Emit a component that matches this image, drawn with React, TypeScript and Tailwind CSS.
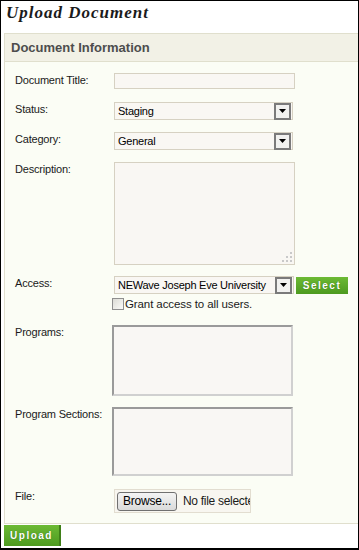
import React from 'react';

// small dropdown arrow button used by the select boxes
function ArrowButton() {
  return (
    <div className="flex h-[17px] w-[17px] shrink-0 items-center justify-center border-2 border-[#7a7a7a] bg-[#f1f1ef]">
      <svg width="7" height="4" viewBox="0 0 7 4">
        <path d="M0 0h7L3.5 4z" fill="#000" />
      </svg>
    </div>
  );
}

function FakeSelect({ value, width }: { value: string; width: string }) {
  return (
    <div className={`flex h-[18px] items-center justify-between border border-[#d6d1c2] bg-[#f9f7f3] pl-[3px] pr-px ${width}`}>
      <span className="whitespace-nowrap text-[11px] leading-none tracking-[-0.25px] text-black">{value}</span>
      <ArrowButton />
    </div>
  );
}

function Row({ label, children, className = '' }: { label: string; children: React.ReactNode; className?: string }) {
  return (
    <div className={`flex items-start ${className}`}>
      <div className="w-[99px] shrink-0 pt-[1px] text-[11px] leading-[13px] tracking-[-0.2px] text-[#1a1a1a]">{label}</div>
      {children}
    </div>
  );
}

function GreenButton({ text, className = '' }: { text: string; className?: string }) {
  return (
    <div
      className={`flex items-center justify-center bg-gradient-to-b from-[#6cba34] to-[#4d9a1f] text-[10px] font-bold tracking-[1.5px] text-white [text-shadow:0_0_1px_#2d6a10] ${className}`}
    >
      {text}
    </div>
  );
}

function ListBox({ height }: { height: string }) {
  return (
    <div className={`ml-[-2px] w-[181px] border-2 border-t-[#9a9a9a] border-l-[#9a9a9a] border-r-[#d0d0d0] border-b-[#d0d0d0] bg-[#f9f7f4] ${height}`} />
  );
}

export default function App() {
  return (
    <div className="h-[550px] w-[359px] overflow-hidden border-l border-t border-r border-b-2 border-black bg-white font-['Liberation_Sans',Arial,sans-serif]">
      <div className="h-[32px] pl-[5px] pt-[2px] font-['Liberation_Serif',serif] text-[17px] font-bold italic leading-[20px] tracking-[1px] text-[#1b1b1b]">
        Upload Document
      </div>

      <div className="ml-[3px] border-l border-t border-b border-[#e0dfcd]">
        <div className="flex h-[28px] items-center border-b border-[#e0dfcd] bg-[#f2f1e6] pl-[6px] text-[13px] font-bold text-[#4d4d4d]">
          Document Information
        </div>

        <div className="flex flex-col bg-[#fbfdf5] pb-[10px] pl-[10px] pt-[11px]">
          <Row label="Document Title:">
            <div className="h-[16px] w-[181px] border border-[#d6d1c2] bg-[#f9f7f3]" />
          </Row>

          <Row label="Status:" className="mt-[13px]">
            <FakeSelect value="Staging" width="w-[179px]" />
          </Row>

          <Row label="Category:" className="mt-[12px]">
            <FakeSelect value="General" width="w-[179px]" />
          </Row>

          <Row label="Description:" className="mt-[12px]">
            <div className="flex h-[103px] w-[181px] items-end justify-end border border-[#d6d1c2] bg-[#f9f7f3] p-[2px]">
              <svg width="11" height="11" viewBox="0 0 11 11">
                <rect x="9" y="1" width="2" height="2" fill="#c9c9c9" />
                <rect x="5" y="5" width="2" height="2" fill="#c9c9c9" />
                <rect x="9" y="5" width="2" height="2" fill="#c9c9c9" />
                <rect x="1" y="9" width="2" height="2" fill="#c9c9c9" />
                <rect x="5" y="9" width="2" height="2" fill="#c9c9c9" />
                <rect x="9" y="9" width="2" height="2" fill="#c9c9c9" />
              </svg>
            </div>
          </Row>

          <Row label="Access:" className="mt-[11px]">
            <div className="flex flex-col">
              <div className="flex items-center">
                <FakeSelect value="NEWave Joseph Eve University" width="w-[180px]" />
                <GreenButton text="Select" className="ml-[2px] mt-px h-[17px] w-[52px]" />
              </div>
              <div className="ml-[-2px] mt-[3px] flex items-center">
                <div className="h-[12px] w-[12px] border border-[#8f8f8f] bg-gradient-to-br from-[#dcdcd6] to-[#fbfbf8]" />
                <span className="ml-px text-[11.5px] leading-[14px] tracking-[-0.1px] text-[#1a1a1a]">Grant access to all users.</span>
              </div>
            </div>
          </Row>

          <Row label="Programs:" className="mt-[14px]">
            <ListBox height="h-[71px]" />
          </Row>

          <Row label="Program Sections:" className="mt-[11px]">
            <ListBox height="h-[69px]" />
          </Row>

          <Row label="File:" className="mt-[13px]">
            <div className="flex h-[24px] w-[137px] items-center overflow-hidden border border-[#e2ddd0] bg-[#f8f6f0] pl-[2px]">
              <div className="flex h-[19px] w-[60px] shrink-0 items-center justify-center rounded-[3px] border border-[#707070] bg-gradient-to-b from-[#f4f4f4] to-[#dadada] text-[12px] tracking-[-0.2px] text-black">
                Browse...
              </div>
              <span className="ml-[6px] whitespace-nowrap text-[12px] tracking-[-0.3px] text-[#1a1a1a]">No file selecte</span>
            </div>
          </Row>
        </div>
      </div>

      <GreenButton text="Upload" className="ml-[3px] mt-px h-[21px] w-[57px] border-r-2 border-[#3f7f18]" />
    </div>
  );
}
